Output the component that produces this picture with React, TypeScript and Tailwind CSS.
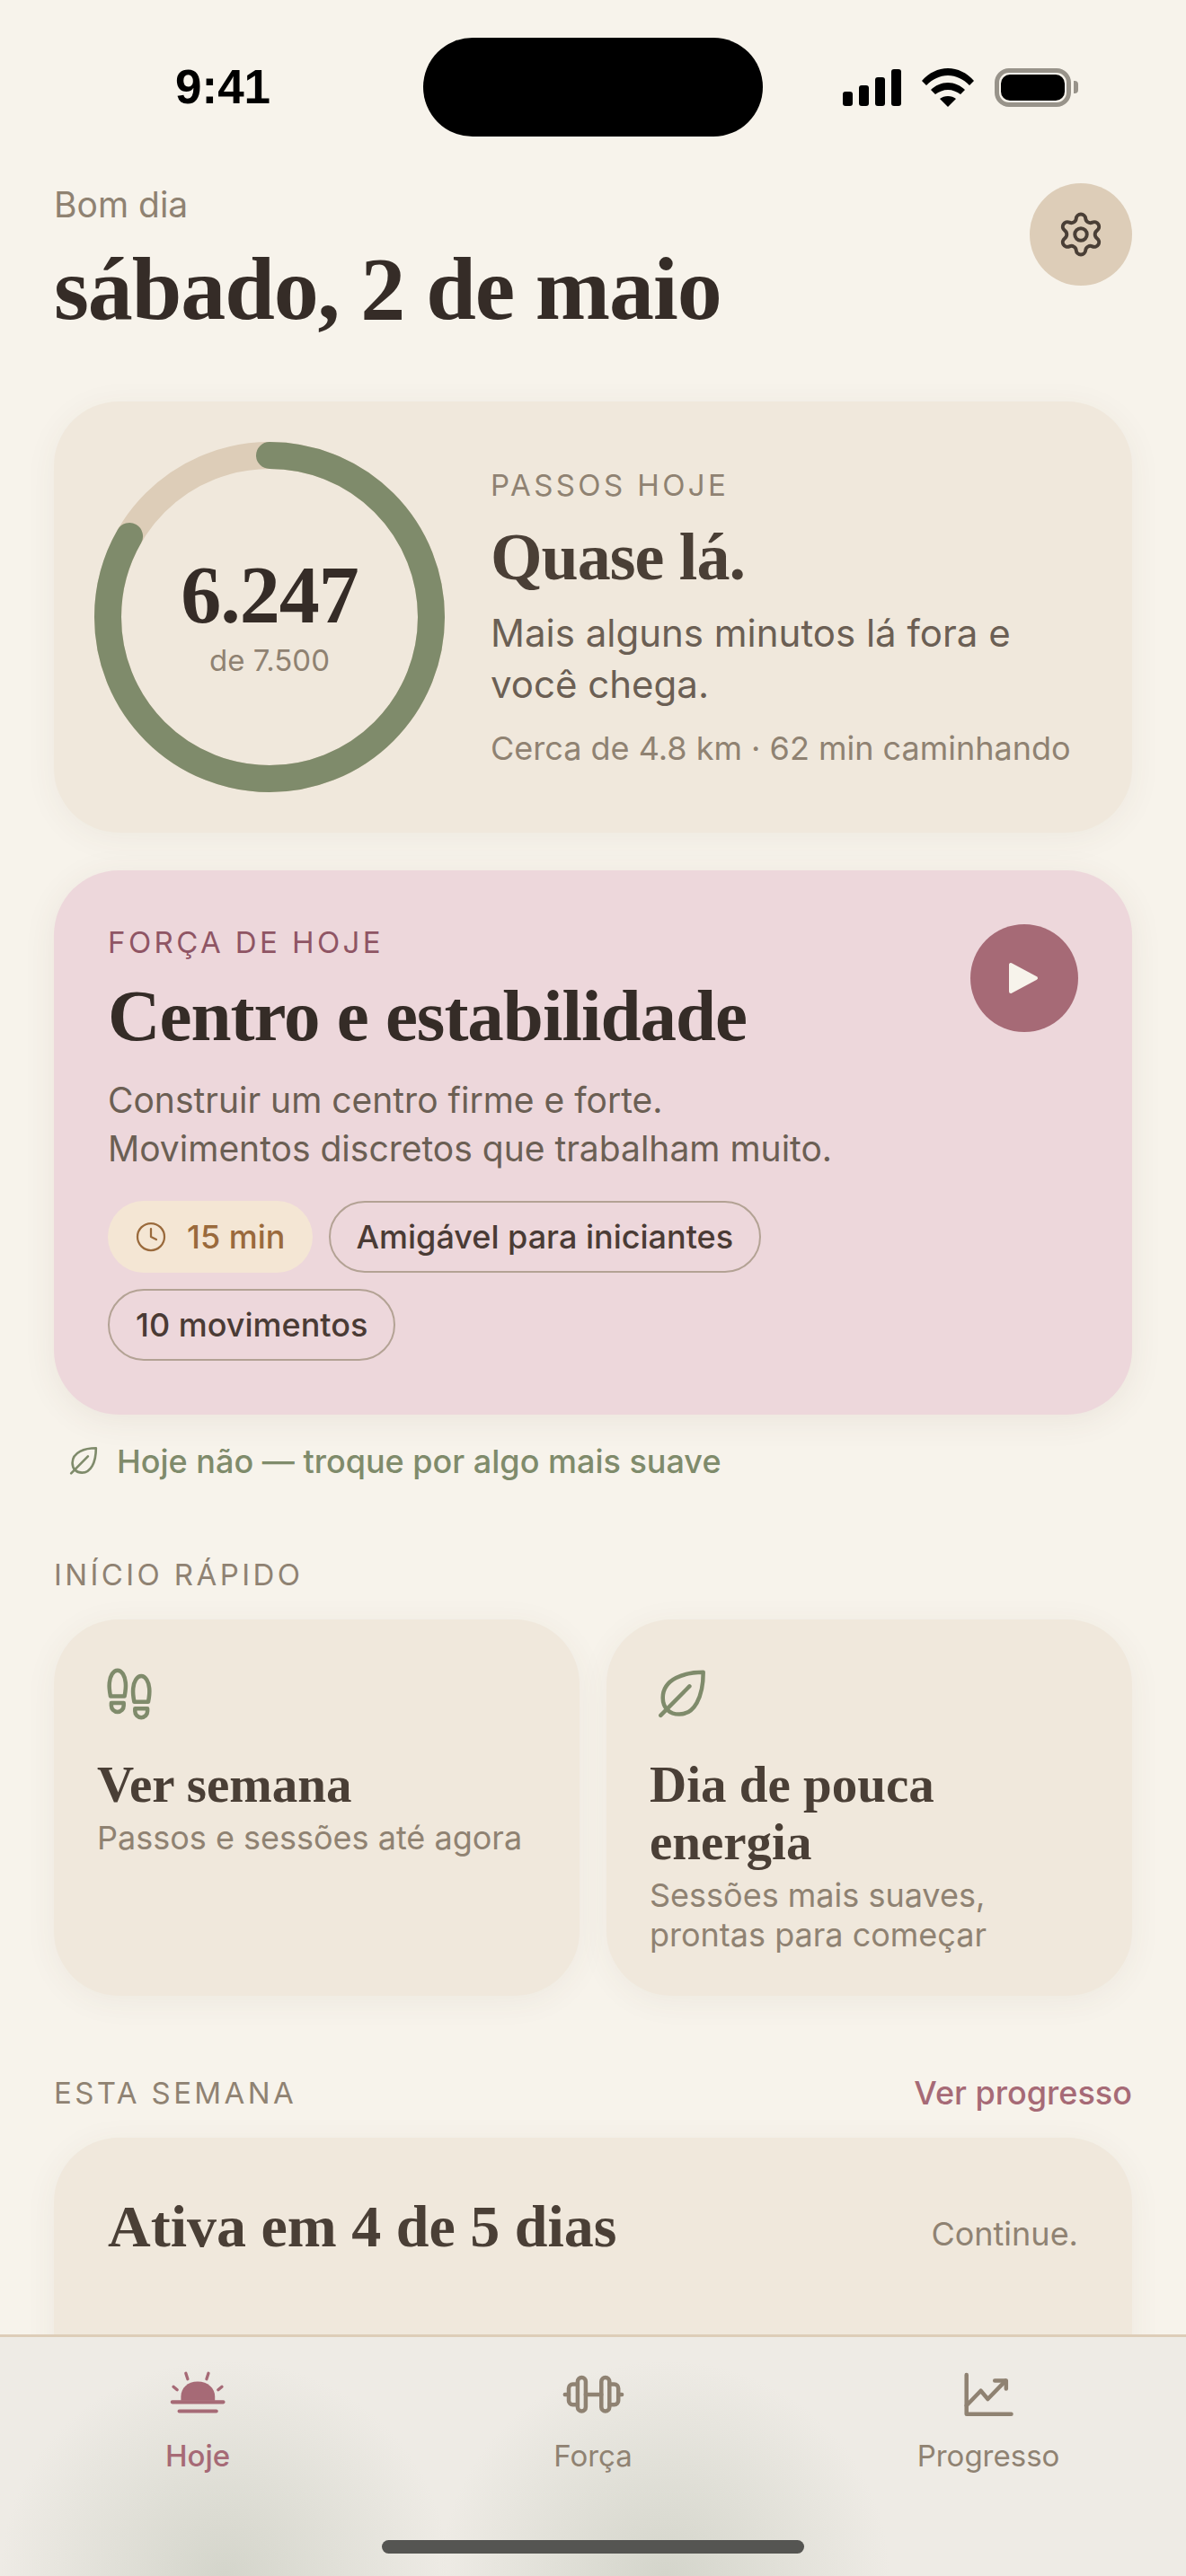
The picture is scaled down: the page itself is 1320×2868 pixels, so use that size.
import { Clock, Settings } from "lucide-react"

const LeafIcon = ({ className }: { className: string }) => (
  <svg viewBox="0 0 24 24" fill="none" stroke="currentColor" strokeWidth="1.5" strokeLinecap="round" strokeLinejoin="round" className={className}>
    <path d="M19.9 3.6C13 3.6 5 6 4.9 13c0 4 2.6 6.2 6.1 6.2 5.5 0 8.9-6.2 8.9-15.6Z" />
    <path d="M4.1 19.6 14.8 8.8" />
  </svg>
)

const FootstepsIcon = ({ className }: { className: string }) => (
  <svg viewBox="0 0 24 24" fill="none" stroke="currentColor" strokeWidth="1.5" strokeLinejoin="round" className={className}>
    <path d="M5 12.5c-.5-2.500-.5-4-.4-5 .2-2.500 1.400-4.600 3-4.600s2.800 2.100 3 4.600c.1 1 .1 2.500-.4 5Z" />
    <path d="M5.300 15h4.600v1a2.300 2.300 0 0 1-4.600 0Z" />
    <path d="M13.800 14.600c-.5-2.500-.5-4-.4-5 .2-2.500 1.400-4.600 3-4.600s2.800 2.100 3 4.600c.1 1 .1 2.500-.4 5Z" />
    <path d="M14.100 17.100h4.600v1a2.300 2.300 0 0 1-4.600 0Z" />
  </svg>
)

const SunIcon = ({ className }: { className: string }) => (
  <svg viewBox="0 0 24 24" fill="none" stroke="currentColor" strokeWidth="1.4" strokeLinecap="round" className={className}>
    <path d="M5.800 14.600V13c0-3 2.400-5.500 6.200-5.500s6.400 2.500 6.400 5.500v1.600Z" fill="currentColor" stroke="none" />
    <path d="M2.600 15.100h18.900M5.200 18.500h13.700" />
    <path d="M7.600 4.400l.7 2.200M16 4.400l-.7 2.200M3 9.400l1.400 1.200M21 9.400l-1.400 1.200" strokeWidth="1.1" />
  </svg>
)

const DumbbellIcon = ({ className }: { className: string }) => (
  <svg viewBox="0 0 24 24" fill="none" stroke="currentColor" strokeWidth="1.5" strokeLinecap="round" strokeLinejoin="round" className={className}>
    <rect x="6.300" y="6" width="3" height="12.500" rx="1.500" />
    <rect x="15.100" y="6" width="3" height="12.500" rx="1.500" />
    <path d="M6.300 8.500H4.500A1.500 1.500 0 0 0 3 10v4.600a1.500 1.500 0 0 0 1.500 1.500h1.800" />
    <path d="M18.100 8.500h1.800a1.500 1.500 0 0 1 1.500 1.500v4.600a1.500 1.500 0 0 1-1.500 1.500h-1.800" />
    <path d="M3 12.300H1.600M21.400 12.300h1.300M9.300 12.300h5.800" />
  </svg>
)

const ChartIcon = ({ className }: { className: string }) => (
  <svg viewBox="0 0 24 24" fill="none" stroke="currentColor" strokeWidth="1.5" strokeLinecap="round" strokeLinejoin="round" className={className}>
    <path d="M3.900 5v14.600h16.600" />
    <path d="M3.900 16.400 9.200 10.900 11.800 14l6.600-6.800" />
    <path d="M14.400 7.200h4.200v3" />
  </svg>
)

const StatusIcons = () => (
  <div className="flex items-center">
    <svg viewBox="0 0 65 41" className="h-[41px] w-[65px]" fill="#000">
      <rect x="0" y="25" width="11" height="16" rx="3" />
      <rect x="18" y="18" width="11" height="23" rx="3" />
      <rect x="36" y="9" width="11" height="32" rx="3" />
      <rect x="54" y="0" width="11" height="41" rx="3" />
    </svg>
    <svg viewBox="0 0 58 43" className="ml-[23px] h-[43px] w-[58px]" fill="#000">
      <path d="M0 14C8 5 18 0 29 0s21 5 29 14l-5 5C46 12 38 8 29 8S12 12 5 19Z" />
      <path d="M10 24c5-5 12-8 19-8s14 3 19 8l-5 5c-4-3-9-5-14-5s-10 2-14 5Z" />
      <path d="M20 34c2.500-2 5.500-3 9-3s6.500 1 9 3l-9 9Z" />
    </svg>
    <div className="ml-[23px] flex h-[43px] w-[85px] items-center justify-center rounded-[16px] border-[5px] border-[#98938a]">
      <div className="h-[29px] w-[71px] rounded-[10px] bg-black" />
    </div>
    <div className="ml-[3px] h-[14px] w-[5px] rounded-r-[4px] bg-[#98938a]" />
  </div>
)

const StepsRing = () => (
  <div className="relative h-[390px] w-[390px] shrink-0">
    <svg viewBox="0 0 390 390" className="h-full w-full -rotate-90">
      <circle cx="195" cy="195" r="180" fill="none" stroke="#ddcdb8" strokeWidth="30" />
      <circle
        cx="195"
        cy="195"
        r="180"
        fill="none"
        stroke="#7f8b6b"
        strokeWidth="30"
        strokeLinecap="round"
        strokeDasharray={`${2 * Math.PI * 180 * (6247 / 7500)} ${2 * Math.PI * 180}`}
      />
    </svg>
    <div className="absolute inset-0 flex flex-col items-center justify-center pt-[4px]">
      <span className="font-['Liberation_Serif',serif] text-[90px] leading-[84px] font-bold tracking-[-1px] text-[#352c27]">6.247</span>
      <span className="mt-[8px] text-[33px] leading-[44px] text-[#8f8272]">de 7.500</span>
    </div>
  </div>
)

const Pill = ({ label }: { label: string }) => (
  <span className="flex h-[80px] items-center rounded-full border-2 border-[#b3a294] px-[29px] text-[36px] font-medium text-[#4a3b35]">
    {label}
  </span>
)

const NavItem = ({ icon, label, active }: { icon: React.ReactNode; label: string; active?: boolean }) => (
  <div className={active ? "flex flex-col items-center text-[#a66a76]" : "flex flex-col items-center text-[#8f8272]"}>
    {icon}
    <span className={active ? "mt-[11px] text-[33px] leading-[44px] font-medium" : "mt-[11px] text-[33px] leading-[44px]"}>{label}</span>
  </div>
)

export default function App() {
  return (
    <div className="relative h-[2868px] w-[1320px] overflow-hidden bg-[#f7f3eb] font-['Inter',sans-serif]">
      <div className="flex h-[194px] items-center justify-between pr-[120px] pl-[195px]">
        <span className="font-['Liberation_Sans',sans-serif] text-[53px] font-bold text-black">9:41</span>
        <StatusIcons />
      </div>
      <div className="absolute top-[42px] left-[471px] h-[110px] w-[378px] rounded-full bg-black" />

      <main className="px-[60px]">
        <header className="flex h-[253px] items-start justify-between pt-[10px]">
          <div>
            <p className="text-[39px] leading-[48px] text-[#8f8272]">Bom dia</p>
            <h1 className="mt-[18px] font-['Liberation_Serif',serif] text-[100px] leading-[104px] font-bold tracking-[-1.1px] text-[#352c27]">sábado, 2 de maio</h1>
          </div>
          <button className="flex h-[114px] w-[114px] items-center justify-center rounded-full bg-[#ddcdb8] text-[#4a3f36]">
            <Settings size={54} strokeWidth={1.75} />
          </button>
        </header>

        <section className="flex h-[480px] items-center gap-[51px] rounded-[72px] bg-[#f0e8dc] px-[45px] shadow-[0_6px_36px_rgba(90,70,50,0.06)]">
          <StepsRing />
          <div>
            <p className="text-[33px] leading-[44px] tracking-[3.4px] text-[#8f8272]">PASSOS HOJE</p>
            <h2 className="mt-[16px] font-['Liberation_Serif',serif] text-[74px] leading-[84px] font-bold tracking-[-1px] text-[#4a3f36]">Quase lá.</h2>
            <p className="mt-[14px] text-[42px] leading-[57px] text-[#6b5f54]">Mais alguns minutos lá fora e você chega.</p>
            <p className="mt-[19px] text-[36px] leading-[48px] text-[#8f8272]">Cerca de 4.8 km · 62 min caminhando</p>
          </div>
        </section>

        <section className="relative mt-[42px] rounded-[72px] bg-[#edd7db] p-[60px] shadow-[0_6px_36px_rgba(90,70,50,0.08)]">
          <button className="absolute top-[60px] right-[60px] flex h-[120px] w-[120px] items-center justify-center rounded-full bg-[#a66a76]">
            <svg viewBox="0 0 36 36" className="h-[36px] w-[36px]" fill="#f7f3eb" stroke="#f7f3eb" strokeWidth="4" strokeLinejoin="round">
              <path d="M3 3v30l28-15Z" />
            </svg>
          </button>
          <p className="text-[33px] leading-[40px] tracking-[3.4px] text-[#8f5564]">FORÇA DE HOJE</p>
          <h2 className="mt-[16px] font-['Liberation_Serif',serif] text-[81px] leading-[92px] font-bold tracking-[-1px] text-[#352c27]">Centro e estabilidade</h2>
          <p className="mt-[21px] text-[39px] leading-[54px] text-[#6b5f54]">
            Construir um centro firme e forte.
            <br />
            Movimentos discretos que trabalham muito.
          </p>
          <div className="mt-[31px] flex max-w-[800px] flex-wrap gap-[18px]">
            <span className="flex h-[80px] items-center gap-[22px] rounded-full bg-[#f4e6d4] px-[30px] text-[36px] font-medium text-[#9a6a3c]">
              <Clock size={36} strokeWidth={1.5} />
              15 min
            </span>
            <Pill label="Amigável para iniciantes" />
            <Pill label="10 movimentos" />
          </div>
        </section>

        <div className="mt-[27px] flex h-[50px] items-center gap-[16px] pl-[12px] text-[#7f8b6b]">
          <LeafIcon className="h-[42px] w-[42px]" />
          <span className="text-[36px] font-medium">Hoje não — troque por algo mais suave</span>
        </div>

        <p className="mt-[79px] text-[33px] leading-[44px] tracking-[3.4px] text-[#8f8272]">INÍCIO RÁPIDO</p>

        <div className="mt-[28px] grid grid-cols-2 gap-[30px]">
          <div className="h-[419px] rounded-[72px] bg-[#f0e8dc] p-[48px] shadow-[0_6px_36px_rgba(90,70,50,0.06)]">
            <FootstepsIcon className="h-[72px] w-[72px] text-[#7f8b6b]" />
            <h3 className="mt-[32px] font-['Liberation_Serif',serif] text-[57px] leading-[64px] font-bold text-[#4a3f36]">Ver semana</h3>
            <p className="mt-[5px] text-[36px] leading-[44px] text-[#8f8272]">Passos e sessões até agora</p>
          </div>
          <div className="h-[419px] rounded-[72px] bg-[#f0e8dc] p-[48px] shadow-[0_6px_36px_rgba(90,70,50,0.06)]">
            <LeafIcon className="h-[72px] w-[72px] text-[#7f8b6b]" />
            <h3 className="mt-[32px] font-['Liberation_Serif',serif] text-[57px] leading-[64px] font-bold text-[#4a3f36]">
              Dia de pouca
              <br />
              energia
            </h3>
            <p className="mt-[5px] text-[36px] leading-[44px] text-[#8f8272]">
              Sessões mais suaves,
              <br />
              prontas para começar
            </p>
          </div>
        </div>

        <div className="mt-[86px] flex items-center justify-between">
          <p className="text-[33px] leading-[44px] tracking-[3.4px] text-[#8f8272]">ESTA SEMANA</p>
          <span className="text-[36px] leading-[44px] font-medium text-[#a66a76]">Ver progresso</span>
        </div>

        <div className="mt-[28px] flex h-[320px] items-start justify-between rounded-[72px] bg-[#f0e8dc] px-[60px] pt-[60px] shadow-[0_6px_36px_rgba(90,70,50,0.06)]">
          <h3 className="font-['Liberation_Serif',serif] text-[66px] leading-[78px] font-bold text-[#4a3f36]">Ativa em 4 de 5 dias</h3>
          <span className="mt-[25px] text-[36px] leading-[44px] text-[#8f8272]">Continue.</span>
        </div>
      </main>

      <nav className="absolute right-0 bottom-0 left-0 grid h-[269px] grid-cols-3 border-t-[3px] border-[#ddcdb8] bg-[#eeebe5] bg-[radial-gradient(ellipse_250px_240px_at_250px_100%,#d4d5cb,transparent),radial-gradient(ellipse_250px_240px_at_740px_100%,#d4d5cb,transparent)] pt-[27px]">
        <NavItem icon={<SunIcon className="h-[72px] w-[72px]" />} label="Hoje" active />
        <NavItem icon={<DumbbellIcon className="h-[72px] w-[72px]" />} label="Força" />
        <NavItem icon={<ChartIcon className="h-[72px] w-[72px]" />} label="Progresso" />
      </nav>
      <div className="absolute bottom-[25px] left-[425px] h-[15px] w-[470px] rounded-full bg-[#555552]" />
    </div>
  )
}
